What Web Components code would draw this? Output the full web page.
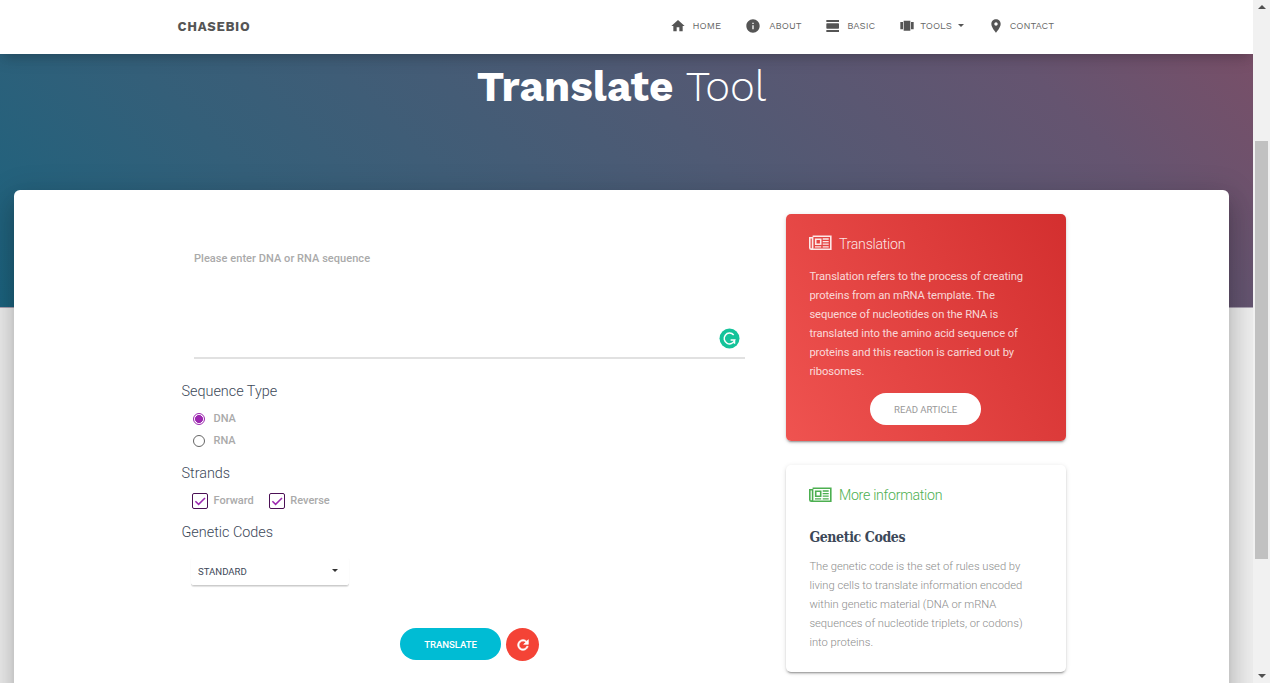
<!DOCTYPE html>
<html lang="en">
<head>
<meta charset="utf-8">
<title>ChaseBio - Translate Tool</title>
<style>
html,body{margin:0;height:100%;overflow:hidden;background:#eee;font-family:Roboto,"Liberation Sans",sans-serif}
</style>
</head>
<body>
<bio-app></bio-app>
<script>
const define = (name, css, html) => customElements.define(name, class extends HTMLElement {
  constructor() {
    super();
    const t = document.createElement('template');
    t.innerHTML = `<style>*{box-sizing:border-box}${css}</style>` + (typeof html === 'function' ? html(this) : html);
    this.attachShadow({mode: 'open'}).append(t.content.cloneNode(true));
  }
});

const ICONS = {
  home: 'M10 20v-6h4v6h5v-8h3L12 3 2 12h3v8z',
  info: 'M12 2C6.48 2 2 6.48 2 12s4.48 10 10 10 10-4.48 10-10S17.52 2 12 2zm1 15h-2v-6h2v6zm0-8h-2V7h2v2z',
  day: 'M2 21h19v-3H2v3zM20 8H3c-.55 0-1 .45-1 1v6c0 .55.45 1 1 1h17c.55 0 1-.45 1-1V9c0-.55-.45-1-1-1zM2 3v3h19V3H2z',
  carousel: 'M7 19h10V4H7v15zm-5-2h4V6H2v11zM18 6v11h4V6h-4z',
  place: 'M12 2C8.13 2 5 5.13 5 9c0 5.25 7 13 7 13s7-7.75 7-13c0-3.87-3.13-7-7-7zm0 9.5c-1.38 0-2.5-1.12-2.5-2.5s1.12-2.5 2.5-2.5 2.5 1.12 2.5 2.5-1.12 2.5-2.5 2.5z',
  refresh: 'M17.65 6.35C16.2 4.9 14.21 4 12 4c-4.42 0-7.99 3.58-7.99 8s3.57 8 7.99 8c3.73 0 6.84-2.55 7.73-6h-2.08c-.82 2.33-3.04 4-5.65 4-3.31 0-6-2.69-6-6s2.69-6 6-6c1.66 0 3.14.69 4.22 1.78L13 11h7V4l-2.35 2.35z'
};
define('bio-icon', ':host{display:block;width:16px;height:16px;flex:none}svg{display:block;width:100%;height:100%}:host([name=refresh]) path{stroke:currentColor;stroke-width:1}',
  el => `<svg viewBox="0 0 24 24" fill="currentColor"><path d="${ICONS[el.getAttribute('name')]}"/></svg>`);

define('news-icon', ':host{display:block;width:23px;height:16px;flex:none}svg{display:block}',
  `<svg width="23" height="16" viewBox="0 0 23 16" fill="none" stroke="currentColor" stroke-width="1.6">
  <path d="M3.6 1.2H21.8V14.2H2.3Q.8 14.2.8 12.7V2.7H3.6V12.9Q3.5 14.1 2.3 14.1"/><path d="M6.7 4.3h5v5h-5z"/>
  <path stroke-width="1.3" d="M13.7 4h6M13.7 6.6h6M13.7 9.2h6M6 11.8h6.2M13.7 11.8h6"/></svg>`);

define('nav-item', `:host{display:flex;align-items:center;height:20px;color:#555;font:400 9.6px/20px "Work Sans",Inter,sans-serif;white-space:nowrap}
  .t{margin-left:var(--gap,6px);color:#666}
  .c{border:3px solid transparent;border-top-color:#555;border-bottom:0;margin-left:6px;margin-top:-1px}`,
  el => `<bio-icon name="${el.getAttribute('icon')}"></bio-icon><span class="t"><slot></slot></span>${el.hasAttribute('caret') ? '<i class="c"></i>' : ''}`);

define('bio-navbar', `:host{display:flex;height:54px;background:#fff;position:relative;z-index:2;padding:0 199px 2px 177.5px;align-items:center;justify-content:space-between;box-shadow:0 4px 18px rgba(0,0,0,.12),0 7px 10px -5px rgba(0,0,0,.15)}
  b{font:700 13.2px/20px "Work Sans",Inter,sans-serif;letter-spacing:.68px;color:#555;margin-top:2px}
  nav{display:flex;gap:23.6px}`,
  `<b>CHASEBIO</b><nav>
  <nav-item icon="home">HOME</nav-item><nav-item icon="info" style="--gap:8.6px">ABOUT</nav-item><nav-item icon="day">BASIC</nav-item>
  <nav-item icon="carousel" caret style="--gap:5.4px">TOOLS</nav-item><nav-item icon="place" style="--gap:6.2px">CONTACT</nav-item></nav>`);

define('bio-hero', `:host{display:flex;justify-content:center;height:254px;background:linear-gradient(45deg,#1b637e,#345f79 25%,#4f5a74 57%,#655470 84%,#784f68);border-bottom:1px solid #aaa2b2;padding:9px 10px 0 0}
  h1{margin:0;font:300 42.3px/48px "Work Sans",Inter,sans-serif;color:#fff;white-space:nowrap}
  b{font-weight:700}`, `<h1><b>Translate</b> Tool</h1>`);

define('form-heading', `:host{display:block;font:300 14.4px/20px Roboto,sans-serif;color:#3c4858;padding-left:.5px}`, `<slot></slot>`);

define('bio-radio', `:host{display:flex;align-items:center;height:22px;margin-left:12px;font:500 11px/20px Roboto,sans-serif;color:#aaa}
  i{width:12px;height:12px;border:1px solid #666;border-radius:50%;margin-right:8.5px}
  :host([checked]) i{border-color:#9c27b0;background:radial-gradient(circle,#9c27b0 0 3.7px,#fff 4.3px)}`, `<i></i><slot></slot>`);

define('bio-check', `:host{display:flex;align-items:center;height:20px;font:500 11px/20px Roboto,sans-serif;color:#aaa}
  i{width:16px;height:16px;border:1px solid #4b1055;border-radius:2px;margin-right:5.5px}svg{display:block}`,
  `<i><svg width="14" height="14" viewBox="0 0 14 14" fill="none" stroke="#9c27b0" stroke-width="1.5"><path d="M2.4 7.2 5.6 10.4 12 4"/></svg></i><slot></slot>`);

define('sequence-field', `:host{display:block;position:relative;height:145px;margin:24px 0 0 13px;width:551px;border-bottom:2px solid #e1e1e1;padding:35px 0 0;font:500 11px/20px Roboto,sans-serif;letter-spacing:.05px;color:#aaa}
  slot{margin-left:-.5px}
  svg{position:absolute;right:5px;top:113.5px}`,
  `<slot></slot><svg width="21" height="21" viewBox="0 0 21 21"><circle cx="10.5" cy="10.5" r="10" fill="#15c39a"/><path d="M14.7 7A5.4 5.4 0 1 0 15.8 11.9H11.6M15.5 11.9V15.8" fill="none" stroke="#fff" stroke-width="1.5"/></svg>`);

define('bio-select', `:host{display:flex;align-items:center;justify-content:space-between;width:158px;height:30px;margin:14px 0 0 10px;padding:1px 11px 0 7px;border-radius:3px;border-bottom:1px solid #ccc;box-shadow:0 1px 1px rgba(0,0,0,.12);font:400 9.6px/20px Roboto,sans-serif;color:#3c4858}
  i{border:3px solid transparent;border-top-color:#333;border-bottom:0;margin-top:-3px}`, `<slot></slot><i></i>`);

define('bio-button', `:host{display:flex;align-items:center;justify-content:center;width:101px;height:32px;border-radius:16px;background:#00bcd4;color:#fff;font:500 9.6px/20px Roboto,sans-serif;letter-spacing:-.05px;padding-top:1px}
  :host([kind=round]){width:33px;height:33px;border-radius:50%;background:#f44336;padding:0}
  :host([kind=light]){width:111px;background:#fff;color:#999;font-weight:400;letter-spacing:0}`, `<slot></slot>`);

define('translate-form', `:host{display:block;width:605px}
  .group{display:flex;gap:15px;margin:7px 0 12px 11px}
  .actions{display:flex;gap:5px;margin:42px 0 0 219px}`,
  `<sequence-field>Please enter DNA or RNA sequence</sequence-field>
  <form-heading style="margin-top:23px;margin-bottom:6px">Sequence Type</form-heading>
  <bio-radio checked>DNA</bio-radio><bio-radio>RNA</bio-radio>
  <form-heading style="margin-top:12px">Strands</form-heading>
  <div class="group"><bio-check>Forward</bio-check><bio-check>Reverse</bio-check></div>
  <form-heading>Genetic Codes</form-heading>
  <bio-select style="height:29px;padding-top:2px">STANDARD</bio-select>
  <div class="actions"><bio-button>TRANSLATE</bio-button><bio-button kind="round"><bio-icon name="refresh"></bio-icon></bio-button></div>`);

define('info-card', `:host{display:block;width:280px;height:208px;border-radius:5px;background:#fff;padding:20px 24px 0 23.4px;color:#8c8c8c;box-shadow:0 2px 2px rgba(0,0,0,.14),0 3px 1px -2px rgba(0,0,0,.2),0 1px 5px rgba(0,0,0,.12);font:300 11.2px/19px Roboto,sans-serif}
  header{display:flex;gap:6.5px;height:20px;align-items:center;color:#4caf50;font:300 14.2px/20px Roboto,sans-serif;letter-spacing:-.28px}
  :host([tone=red]){height:227px;background:linear-gradient(60deg,#ef5350,#d32f2f);color:rgba(255,255,255,.8);font-weight:400;letter-spacing:-.08px}
  :host([tone=red]) header{color:rgba(255,255,255,.88)}
  news-icon{margin-top:-2px}:host(:not([tone])) news-icon{margin-top:-1px}`,
  `<header><news-icon></news-icon><slot name="title"></slot></header><slot></slot>`);

define('bio-sidebar', `:host{display:flex;flex-direction:column;gap:24px;padding-top:24px}
  p{margin:0;white-space:nowrap}.first{margin-top:13px}
  bio-button{margin:12px auto 0}
  h4{margin:22px 0 10px;font:700 14px/20px "Roboto Slab","DejaVu Serif Condensed","DejaVu Serif",serif;letter-spacing:-.4px;color:#3c4858;white-space:nowrap}`,
  `<info-card tone="red"><span slot="title">Translation</span>
   <p class="first">Translation refers to the process of creating<br>proteins from an mRNA template. The<br>sequence of nucleotides on the RNA is<br>translated into the amino acid sequence of<br>proteins and this reaction is carried out by<br>ribosomes.</p>
   <bio-button kind="light">READ ARTICLE</bio-button></info-card>
   <info-card style="height:207px"><span slot="title">More information</span><h4>Genetic Codes</h4>
   <p>The genetic code is the set of rules used by<br>living cells to translate information encoded<br>within genetic material (DNA or mRNA<br>sequences of nucleotide triplets, or codons)<br>into proteins.</p></info-card>`);

define('bio-panel', `:host{display:flex;position:relative;z-index:1;height:560px;margin:-118px 24px 0 14px;padding-left:167px;border-radius:6px;background:#fff;box-shadow:0 16px 24px 2px rgba(0,0,0,.14),0 6px 30px 5px rgba(0,0,0,.12),0 8px 10px -5px rgba(0,0,0,.2)}`, `<slot></slot>`);

define('bio-scrollbar', `:host{display:flex;flex-direction:column;width:17px;height:683px;background:#f1f1f1;align-items:center;padding:5px 0;position:relative;z-index:3}
  i{border:4px solid transparent;flex:none}.u{border-bottom-color:#505050;border-top:0}.d{border-top-color:#505050;border-bottom:0;margin-top:auto}
  b{width:13px;height:418px;background:#c1c1c1;margin-top:132px}`, `<i class="u"></i><b></b><i class="d"></i>`);

define('bio-app', `:host{display:grid;grid-template-columns:1253px 17px;height:683px;overflow:hidden}main{height:683px;overflow:hidden}`,
  `<main><bio-navbar></bio-navbar><bio-hero></bio-hero><bio-panel><translate-form></translate-form><bio-sidebar></bio-sidebar></bio-panel></main><bio-scrollbar></bio-scrollbar>`);
</script>
</body>
</html>
